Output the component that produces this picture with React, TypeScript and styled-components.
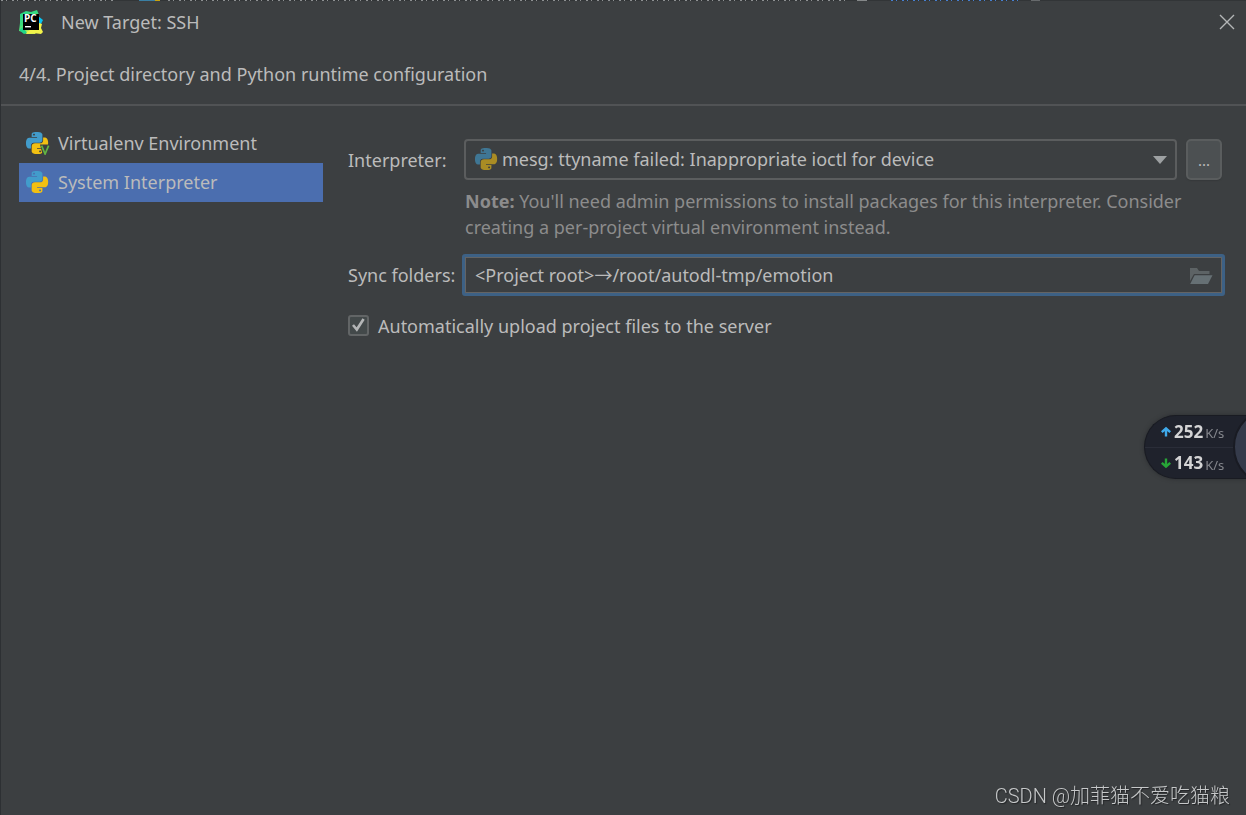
import React, { useState } from 'react';
import styled, { createGlobalStyle } from 'styled-components';

const GlobalStyle = createGlobalStyle`
  *, *::before, *::after { box-sizing: border-box; }
  body {
    margin: 0;
    background: #3c3f41;
    color: #bbbbbb;
    font-family: 'Noto Sans', 'Noto Sans CJK SC', sans-serif;
    font-size: 18px;
    line-height: 26px;
  }
  button, input, select { font: inherit; color: inherit; }
`;

const Dialog = styled.div`
  min-height: 100vh;
  display: flex;
  flex-direction: column;
  border-left: 1px solid #2d3033;
  background: #3c3f41;
`;

/* Sliver of the editor window that shows above the dialog */
const EditorEdge = styled.div`
  height: 1px;
  display: flex;
  background: #323537;
`;

const EdgeRun = styled.span<{ $grow: number; $color: string; $dashed?: boolean }>`
  flex: ${p => p.$grow} 1 0;
  height: 1px;
  background: ${p =>
    p.$dashed
      ? `repeating-linear-gradient(90deg, ${p.$color} 0 2px, transparent 2px 5px, ${p.$color} 5px 6px, transparent 6px 11px)`
      : p.$color};
`;

const TitleBar = styled.header`
  display: flex;
  align-items: center;
  height: 42px;
  padding: 0 11px 0 18px;
`;

const Title = styled.h1`
  flex: 1;
  margin: 0 0 0 18px;
  font-size: 18px;
  font-weight: 400;
`;

const CloseButton = styled.button`
  display: flex;
  padding: 0;
  border: 0;
  background: none;
`;

const StepTitle = styled.h2`
  margin: 0;
  padding: 18px 18px 17px;
  border-bottom: 2px solid #515355;
  font-size: 18px;
  font-weight: 400;
`;

const Content = styled.main`
  flex: 1;
  display: flex;
  gap: 25px;
  padding: 18px 24px 24px 18px;
`;

const Sidebar = styled.nav`
  flex: 0 0 304px;
  display: flex;
  flex-direction: column;
`;

const SidebarItem = styled.button<{ $active?: boolean }>`
  display: flex;
  align-items: center;
  gap: 8px;
  height: 39px;
  padding: 0 7px 2px;
  border: 0;
  background: ${p => (p.$active ? '#4b6eaf' : 'transparent')};
  text-align: left;
`;

const Form = styled.form`
  flex: 1;
  min-width: 0;
  padding-top: 15px;
`;

const FieldRow = styled.div`
  display: grid;
  grid-template-columns: 116px 1fr;
  align-items: center;
`;

const ComboGroup = styled.div`
  display: flex;
  gap: 9px;
`;

const Combo = styled.div`
  position: relative;
  flex: 1;
  min-width: 0;
`;

const Select = styled.select`
  display: block;
  width: 100%;
  height: 41px;
  padding: 0 40px 2px 36px;
  appearance: none;
  border: 2px solid #5b5d5e;
  border-radius: 4px;
  outline: 0;
  background: #3c3f41;
`;

const ComboIcon = styled.span`
  position: absolute;
  left: 11px;
  top: 8px;
  display: flex;
  opacity: 0.6;
  pointer-events: none;
`;

const ComboArrow = styled.svg`
  position: absolute;
  right: 10px;
  top: 17px;
  pointer-events: none;
`;

const MoreButton = styled.button`
  width: 36px;
  height: 41px;
  padding: 0;
  border: 2px solid #5a5d5e;
  border-radius: 5px;
  background: #4c5052;
  box-shadow: 0 1px 1px #36393b;
  font-size: 15px;
`;

const Note = styled.p`
  margin: 8px 0 14px 117px;
  color: #8c8c8c;
`;

const PathField = styled.div`
  display: flex;
  align-items: center;
  height: 42px;
  margin: 0 -3px 0 -2px;
  padding-right: 9px;
  border: 3px solid #3d6185;
  border-radius: 3px;
  box-shadow: inset 0 0 0 1px #646464;
`;

const PathInput = styled.input`
  flex: 1;
  min-width: 0;
  padding: 0 10px;
  border: 0;
  outline: 0;
  background: transparent;
`;

const IconButton = styled.button`
  display: flex;
  padding: 2px 0 0;
  border: 0;
  background: none;
`;

const CheckRow = styled.label`
  display: flex;
  align-items: center;
  gap: 9px;
  margin-top: 17px;
`;

const Checkbox = styled.input`
  appearance: none;
  width: 21px;
  height: 21px;
  margin: 0;
  border: 2px solid #626566;
  border-radius: 3px;
  background: #43494a;
`;

const CheckBoxWrap = styled.span`
  position: relative;
  display: flex;
  margin-bottom: 2px;
`;

const CheckMark = styled.svg`
  position: absolute;
  left: 3px;
  top: 2px;
  pointer-events: none;
`;

const NetMonitor = styled.aside`
  position: fixed;
  right: 0;
  top: 415px;
  width: 102px;
  overflow: hidden;
  border: 1px solid #191b22;
  border-right: 0;
  border-radius: 32px 0 0 32px;
  background: #1f222c;
  box-shadow: 0 0 4px #2b2d30;
`;

const Rate = styled.div`
  display: flex;
  align-items: center;
  gap: 2px;
  height: 31px;
  padding-left: 15px;
  font-family: 'Open Sans', sans-serif;

  & + & { border-top: 1px solid #2a2d38; }
`;

const RateValue = styled.strong`
  font-size: 17px;
  font-weight: 700;
  color: #d4d4d5;
`;

const RateUnit = styled.span`
  padding-top: 3px;
  font-family: 'Noto Sans', sans-serif;
  font-size: 13px;
  color: #85878d;
`;

const MonitorKnob = styled.span`
  position: absolute;
  left: 88px;
  top: -8px;
  width: 78px;
  height: 78px;
  border: 2px solid #191b23;
  border-radius: 50%;
  background: #353b4b;
`;

const Watermark = styled.div`
  position: fixed;
  right: 16px;
  bottom: 6px;
  font-family: Roboto, 'Noto Sans CJK SC', sans-serif;
  font-size: 20px;
  font-weight: 300;
  color: #c6c8c9;
  text-shadow: 1px 1px 1px #222426;
`;

const SNAKE =
  'M14.25.18l.9.2.73.26.59.3.45.32.34.34.25.34.16.33.1.3.04.26.02.2-.01.13V8.5l-.05.63-.13.55-.21.46-.26.38-.3.31-.33.25-.35.19-.35.14-.33.1-.3.07-.26.04-.21.02H8.77l-.69.05-.59.14-.5.22-.41.27-.33.32-.27.35-.2.36-.15.37-.1.35-.07.32-.04.27-.02.21v3.06H3.17l-.21-.03-.28-.07-.32-.12-.35-.18-.36-.26-.36-.36-.35-.46-.32-.59-.28-.73-.21-.88-.14-1.05-.05-1.23.06-1.22.16-1.04.24-.87.32-.71.36-.57.4-.44.42-.33.42-.24.4-.16.36-.1.32-.05.24-.01h.16l.06.01h8.16v-.83H6.18l-.01-2.75-.02-.37.05-.34.11-.31.17-.28.25-.26.31-.23.38-.2.44-.18.51-.15.58-.12.64-.1.71-.06.77-.04.84-.02 1.27.05zm-6.3 1.98l-.23.33-.08.41.08.41.23.34.33.22.41.09.41-.09.33-.22.23-.34.08-.41-.08-.41-.23-.33-.33-.22-.41-.09-.41.09z';

function PythonIcon({ virtual }: { virtual?: boolean }) {
  return (
    <svg width="24" height="24" viewBox="0 0 24 24" aria-hidden="true">
      <g transform="translate(0 1) scale(.92)">
        <path d={SNAKE} fill="#429ccb" />
        <path d={SNAKE} fill="#f2c012" transform="rotate(180 12 12)" />
      </g>
      {virtual && (
        <>
          <path d="M14 13.4h10V24H16.6z" fill="#3c3f41" />
          <path d="M15.6 14.6l3.5 8.4 3.5-8.4" fill="none" stroke="#62b543" strokeWidth="1.7" />
        </>
      )}
    </svg>
  );
}

function PyCharmIcon() {
  return (
    <svg width="24" height="24" viewBox="0 0 24 24" aria-hidden="true">
      <defs>
        <linearGradient id="pcBody" x1="0" y1="0" x2=".5" y2="1">
          <stop offset="0" stopColor="#21d789" />
          <stop offset=".55" stopColor="#3edc7c" />
          <stop offset="1" stopColor="#d8f04e" />
        </linearGradient>
      </defs>
      <path d="M1 4L7 1l5 1 6-2 2 5v14l-4 5H8l-3-2-5-1 1-8z" fill="url(#pcBody)" />
      <path d="M19 6l5 4-2 4-3 1z" fill="#07c3f2" />
      <path d="M11 20l9-7 3 1-1 4 2 4-2 2-8-1-6 1-2-1z" fill="#f2f34a" />
      <path d="M0 20l4-3 4 6-3 1z" fill="#21d789" />
      <rect x="4" y="4" width="16" height="16" fill="#000" />
      <text x="5" y="12" fill="#fff" fontFamily="Open Sans, sans-serif" fontWeight="700" fontSize="10">PC</text>
      <rect x="6" y="16" width="6" height="1.4" fill="#fff" />
    </svg>
  );
}

function RateArrow({ down }: { down?: boolean }) {
  return (
    <svg width="12" height="12" viewBox="0 0 12 12" aria-hidden="true">
      <path
        d="M6 10.500V2.500M1.800 6.200L6 2.400l4.200 3.800"
        fill="none"
        stroke={down ? '#27a537' : '#3fa9ea'}
        strokeWidth="2.400"
        transform={down ? 'rotate(180 6 6)' : undefined}
      />
    </svg>
  );
}

export default function App() {
  const [path, setPath] = useState('<Project root>→/root/autodl-tmp/emotion');
  const [upload, setUpload] = useState(true);
  const [kind, setKind] = useState('system');

  return (
    <>
      <GlobalStyle />
      <Dialog>
        <EditorEdge aria-hidden="true">
          <EdgeRun $grow={112} $color="#8d9092" $dashed />
          <EdgeRun $grow={26} $color="transparent" />
          <EdgeRun $grow={16} $color="#3a7fa3" />
          <EdgeRun $grow={5} $color="#c9a30f" />
          <EdgeRun $grow={8} $color="transparent" />
          <EdgeRun $grow={677} $color="#8d9092" $dashed />
          <EdgeRun $grow={12} $color="transparent" />
          <EdgeRun $grow={10} $color="#858889" />
          <EdgeRun $grow={24} $color="transparent" />
          <EdgeRun $grow={130} $color="#467fd0" $dashed />
          <EdgeRun $grow={10} $color="transparent" />
          <EdgeRun $grow={9} $color="#676a6c" />
          <EdgeRun $grow={206} $color="transparent" />
        </EditorEdge>
        <TitleBar>
          <PyCharmIcon />
          <Title>New Target: SSH</Title>
          <CloseButton type="button" aria-label="Close">
            <svg width="16" height="16" viewBox="0 0 16 16" aria-hidden="true">
              <path d="M1 1l14 14M15 1L1 15" stroke="#b4b6b7" strokeWidth="1.4" />
            </svg>
          </CloseButton>
        </TitleBar>
        <StepTitle>4/4. Project directory and Python runtime configuration</StepTitle>
        <Content>
          <Sidebar aria-label="Environment type">
            <SidebarItem type="button" $active={kind === 'virtualenv'} onClick={() => setKind('virtualenv')}>
              <PythonIcon virtual />
              Virtualenv Environment
            </SidebarItem>
            <SidebarItem type="button" $active={kind === 'system'} onClick={() => setKind('system')}>
              <PythonIcon />
              System Interpreter
            </SidebarItem>
          </Sidebar>
          <Form onSubmit={e => e.preventDefault()}>
            <FieldRow>
              <label htmlFor="interpreter">Interpreter:</label>
              <ComboGroup>
                <Combo>
                  <Select id="interpreter">
                    <option>mesg: ttyname failed: Inappropriate ioctl for device</option>
                  </Select>
                  <ComboIcon><PythonIcon /></ComboIcon>
                  <ComboArrow width="14" height="8" viewBox="0 0 14 8" aria-hidden="true">
                    <path d="M0 0h14L7 8z" fill="#9da0a2" />
                  </ComboArrow>
                </Combo>
                <MoreButton type="button" aria-label="Browse interpreters">...</MoreButton>
              </ComboGroup>
            </FieldRow>
            <Note>
              <b>Note:</b> You'll need admin permissions to install packages for this interpreter.
              Consider creating a per-project virtual environment instead.
            </Note>
            <FieldRow>
              <label htmlFor="sync">Sync folders:</label>
              <PathField>
                <PathInput id="sync" value={path} onChange={e => setPath(e.target.value)} />
                <IconButton type="button" aria-label="Choose folder">
                  <svg width="24" height="18" viewBox="0 0 24 18" aria-hidden="true">
                    <path d="M1 1h7l2 3h10.500v3H5L1 14z" fill="#5d6365" />
                    <path d="M5.600 8.200H23.500L19 17H1.200z" fill="#667074" />
                  </svg>
                </IconButton>
              </PathField>
            </FieldRow>
            <CheckRow>
              <CheckBoxWrap>
                <Checkbox type="checkbox" checked={upload} onChange={e => setUpload(e.target.checked)} />
                {upload && (
                  <CheckMark width="15" height="15" viewBox="0 0 15 15" aria-hidden="true">
                    <path d="M2 8l3.800 4.500L12.600 2" fill="none" stroke="#b4b6b7" strokeWidth="2.600" />
                  </CheckMark>
                )}
              </CheckBoxWrap>
              Automatically upload project files to the server
            </CheckRow>
          </Form>
        </Content>
      </Dialog>
      <NetMonitor aria-label="Network speed">
        <Rate>
          <RateArrow />
          <RateValue>252</RateValue>
          <RateUnit>K/s</RateUnit>
        </Rate>
        <Rate>
          <RateArrow down />
          <RateValue>143</RateValue>
          <RateUnit>K/s</RateUnit>
        </Rate>
        <MonitorKnob />
      </NetMonitor>
      <Watermark>CSDN @加菲猫不爱吃猫粮</Watermark>
    </>
  );
}
